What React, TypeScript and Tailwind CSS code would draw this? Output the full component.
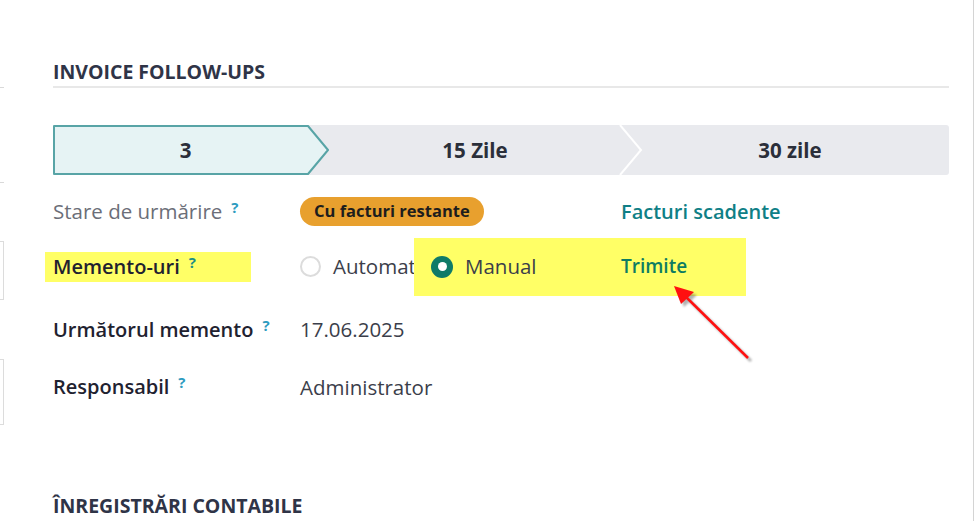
import React from "react";

const font = { fontFamily: '"Open Sans", "Noto Sans", sans-serif' };

function Help({ className = "text-[#2e9bbf]" }: { className?: string }) {
  return (
    <sup className={`ml-[9px] text-[15px] font-bold ${className} relative -top-[5px]`}>?</sup>
  );
}

function Radio({ checked }: { checked?: boolean }) {
  if (checked) {
    return (
      <span className="flex h-[22px] w-[22px] items-center justify-center rounded-full bg-[#0f7b68]">
        <span className="h-[9px] w-[9px] rounded-full bg-white" />
      </span>
    );
  }
  return <span className="h-[21px] w-[21px] rounded-full border-2 border-[#dcdcdc] bg-white" />;
}

function Statusbar() {
  return (
    <div className="flex h-[50px] rounded-[3px] bg-[#e9eaee] text-[20.5px] font-bold text-[#2b2f3a]">
      <div className="relative flex w-[276px] flex-none">
        <svg className="absolute inset-0" width="276" height="50" viewBox="0 0 276 50">
          <polygon
            points="1,1 255,1 275,25 255,49 1,49"
            fill="#e6f3f4"
            stroke="#58a4a6"
            strokeWidth="2"
            strokeLinejoin="round"
          />
        </svg>
        <div className="relative flex w-[265px] items-center justify-center">3</div>
      </div>
      <div className="relative flex w-[314px] flex-none items-center justify-center pr-[22px]">
        <svg className="absolute right-0 top-0" width="24" height="50" viewBox="0 0 24 50">
          <polyline points="1,0 22,25 1,50" fill="none" stroke="#ffffff" strokeWidth="2" />
        </svg>
        15 Zile
      </div>
      <div className="flex flex-1 items-center justify-center pr-[12px]">30 zile</div>
    </div>
  );
}

export default function App() {
  return (
    <div className="relative flex h-[521px] w-[975px] overflow-hidden bg-white" style={font}>
      {/* left edge of the neighbouring panel */}
      <div className="flex w-[4px] flex-none flex-col">
        <div className="h-[87px]" />
        <div className="h-[1px] bg-[#d9d9d9]" />
        <div className="h-[94px]" />
        <div className="h-[1px] bg-[#d9d9d9]" />
        <div className="h-[58px]" />
        <div className="h-[59px] border-y border-r border-[#dcdcdc]" />
        <div className="h-[59px]" />
        <div className="h-[66px] border-y border-r border-[#dcdcdc]" />
      </div>

      <div className="flex flex-1 flex-col pl-[49px] pr-[24px] text-[20.5px] text-[#2b2f3a]">
        <div className="mt-[58px] flex h-[30px] items-center border-b-2 border-[#e8e8e8] text-[19.5px] font-bold text-[#2f3447]">
          INVOICE FOLLOW-UPS
        </div>

        <div className="mt-[37px]">
          <Statusbar />
        </div>

        <div className="mt-[17px] flex h-[40px] items-center">
          <div className="flex w-[247px] flex-none items-center text-[#6b6e78]">
            Stare de urmărire
            <Help />
          </div>
          <div className="flex w-[321px] flex-none items-center">
            <span className="rounded-full bg-[#e8a02e] px-[14px] py-[2px] text-[16.5px] font-bold text-[#1d1d1d]">
              Cu facturi restante
            </span>
          </div>
          <div className="text-[20px] font-semibold text-[#0f7f86]">Facturi scadente</div>
        </div>

        <div className="mt-[15px] flex h-[40px] items-center">
          <div className="flex w-[247px] flex-none items-center">
            <span className="-ml-[8px] flex h-[30px] w-[206px] items-center bg-[#ffff66] pl-[8px] text-[20px] font-semibold text-[#1f2230]">
              Memento-uri
              <Help className="text-[#1c8e86]" />
            </span>
          </div>
          <div className="flex items-center">
            <Radio />
            <span className="ml-[12px] w-[81px] text-[#3b3e4a]">Automat</span>
          </div>
          <div className="flex h-[58px] w-[332px] flex-none items-center self-center bg-[#ffff66] pl-[17px]">
            <Radio checked />
            <span className="ml-[12px] w-[156px] text-[#3b3e4a]">Manual</span>
            <span className="text-[19px] font-semibold text-[#0d7c62]">Trimite</span>
          </div>
        </div>

        <div className="mt-[23px] flex h-[40px] items-center">
          <div className="flex w-[247px] flex-none items-center text-[20px] font-semibold text-[#1f2230]">
            Următorul memento
            <Help />
          </div>
          <div className="text-[#3b3e4a]">17.06.2025</div>
        </div>

        <div className="mt-[18px] flex h-[40px] items-center">
          <div className="flex w-[247px] flex-none items-center text-[20px] font-semibold text-[#1f2230]">
            Responsabil
            <Help />
          </div>
          <div className="text-[#3b3e4a]">Administrator</div>
        </div>

        <div className="mt-[84px] flex h-[30px] items-center text-[19.5px] font-bold text-[#2f3447]">
          ÎNREGISTRĂRI CONTABILE
        </div>
      </div>

      <div className="w-[1px] flex-none bg-[#d4d4d4]" />
      <div className="w-[1px] flex-none bg-white" />

      {/* annotation arrow */}
      <svg className="pointer-events-none absolute left-0 top-0" width="975" height="521">
        <defs>
          <filter id="sh" x="-20%" y="-20%" width="140%" height="140%">
            <feGaussianBlur stdDeviation="1.2" />
          </filter>
        </defs>
        <g transform="translate(3,3)" opacity="0.45" filter="url(#sh)">
          <line x1="748" y1="358" x2="684" y2="295" stroke="#555" strokeWidth="3" />
          <polygon points="674,286 694,292 681,304" fill="#555" />
        </g>
        <line x1="748" y1="358" x2="684" y2="295" stroke="#ff1010" strokeWidth="2.5" />
        <polygon points="674,286 694,292 681,304" fill="#ff1010" />
      </svg>
    </div>
  );
}
